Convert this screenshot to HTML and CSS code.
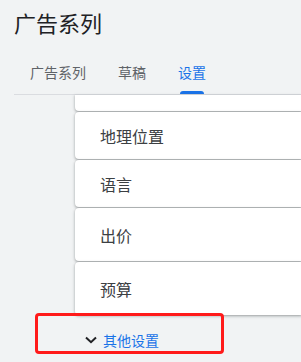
FILE: index.html
```html
<!DOCTYPE html>
<html>
  <head>
    <title>广告系列</title>
    <link rel="stylesheet" href="styles.css">
  </head>
  <body>
    <h1 class="page-title">广告系列</h1>
    <div class="tabs">
      <div class="tab">
        <span class="tab-label">广告系列</span>
        <span class="tab-bar"></span>
      </div>
      <div class="tab">
        <span class="tab-label">草稿</span>
        <span class="tab-bar"></span>
      </div>
      <div class="tab tab-active">
        <span class="tab-label">设置</span>
        <span class="tab-bar"></span>
      </div>
    </div>

    <div class="cards">
      <div class="card card-cut"></div>
      <div class="card card-short">地理位置</div>
      <div class="card card-short">语言</div>
      <div class="card card-tall">出价</div>
      <div class="card card-tall">预算</div>
    </div>

    <div class="more-settings">
      <svg class="chevron" width="12" height="8" viewBox="0 0 12 8">
        <polyline points="1,1.5 6,6.2 11,1.5" fill="none" stroke="#202124" stroke-width="2" />
      </svg>
      <span class="more-label">其他设置</span>
    </div>
  </body>
</html>
```

FILE: styles.css
```css
html,
body {
  margin: 0;
  padding: 0;
  overflow: hidden;
}

body {
  background-color: #f1f3f4;
  font-family: "Noto Sans CJK SC", "Noto Sans", sans-serif;
  color: #3c4043;
}

.page-title {
  margin: 8px 0 0 14px;
  font-size: 22px;
  line-height: 28px;
  font-weight: 400;
  color: #202124;
}

.tabs {
  display: flex;
  margin-left: 14px;
  padding-top: 26px;
  border-bottom: 1px solid #dadce0;
}

.tab {
  display: flex;
  flex-direction: column;
  align-items: center;
  padding: 0 16px;
  font-size: 14px;
  line-height: 20px;
  color: #5f6368;
}

.tab-bar {
  width: 24px;
  height: 3px;
  margin-top: 9px;
  border-radius: 3px 3px 0 0;
}

.tab-active {
  color: #1a73e8;
}

.tab-active .tab-bar {
  background-color: #1a73e8;
}

.cards {
  display: flex;
  flex-direction: column;
  gap: 1px;
  margin-left: 75px;
}

.card {
  display: flex;
  align-items: center;
  padding-left: 25px;
  background-color: #fff;
  border-radius: 4px 0 0 4px;
  box-shadow: 0 1px 2px rgba(60, 64, 67, 0.3), 0 1px 3px 1px rgba(60, 64, 67, 0.15);
  font-size: 16px;
  color: #3c4043;
}

.card-cut {
  height: 16px;
  border-radius: 0 0 0 4px;
}

.card-short {
  height: 47px;
}

.card-tall {
  height: 53px;
}

.more-settings {
  display: flex;
  align-items: center;
  box-sizing: border-box;
  width: 189px;
  height: 41px;
  margin: -2px 0 0 35px;
  padding: 12px 0 0 47px;
  border: 3px solid #ff1a1a;
  border-radius: 4px;
  position: relative;
}

.chevron {
  margin-right: 6px;
}

.more-label {
  font-size: 14px;
  line-height: 20px;
  color: #1a73e8;
}
```
